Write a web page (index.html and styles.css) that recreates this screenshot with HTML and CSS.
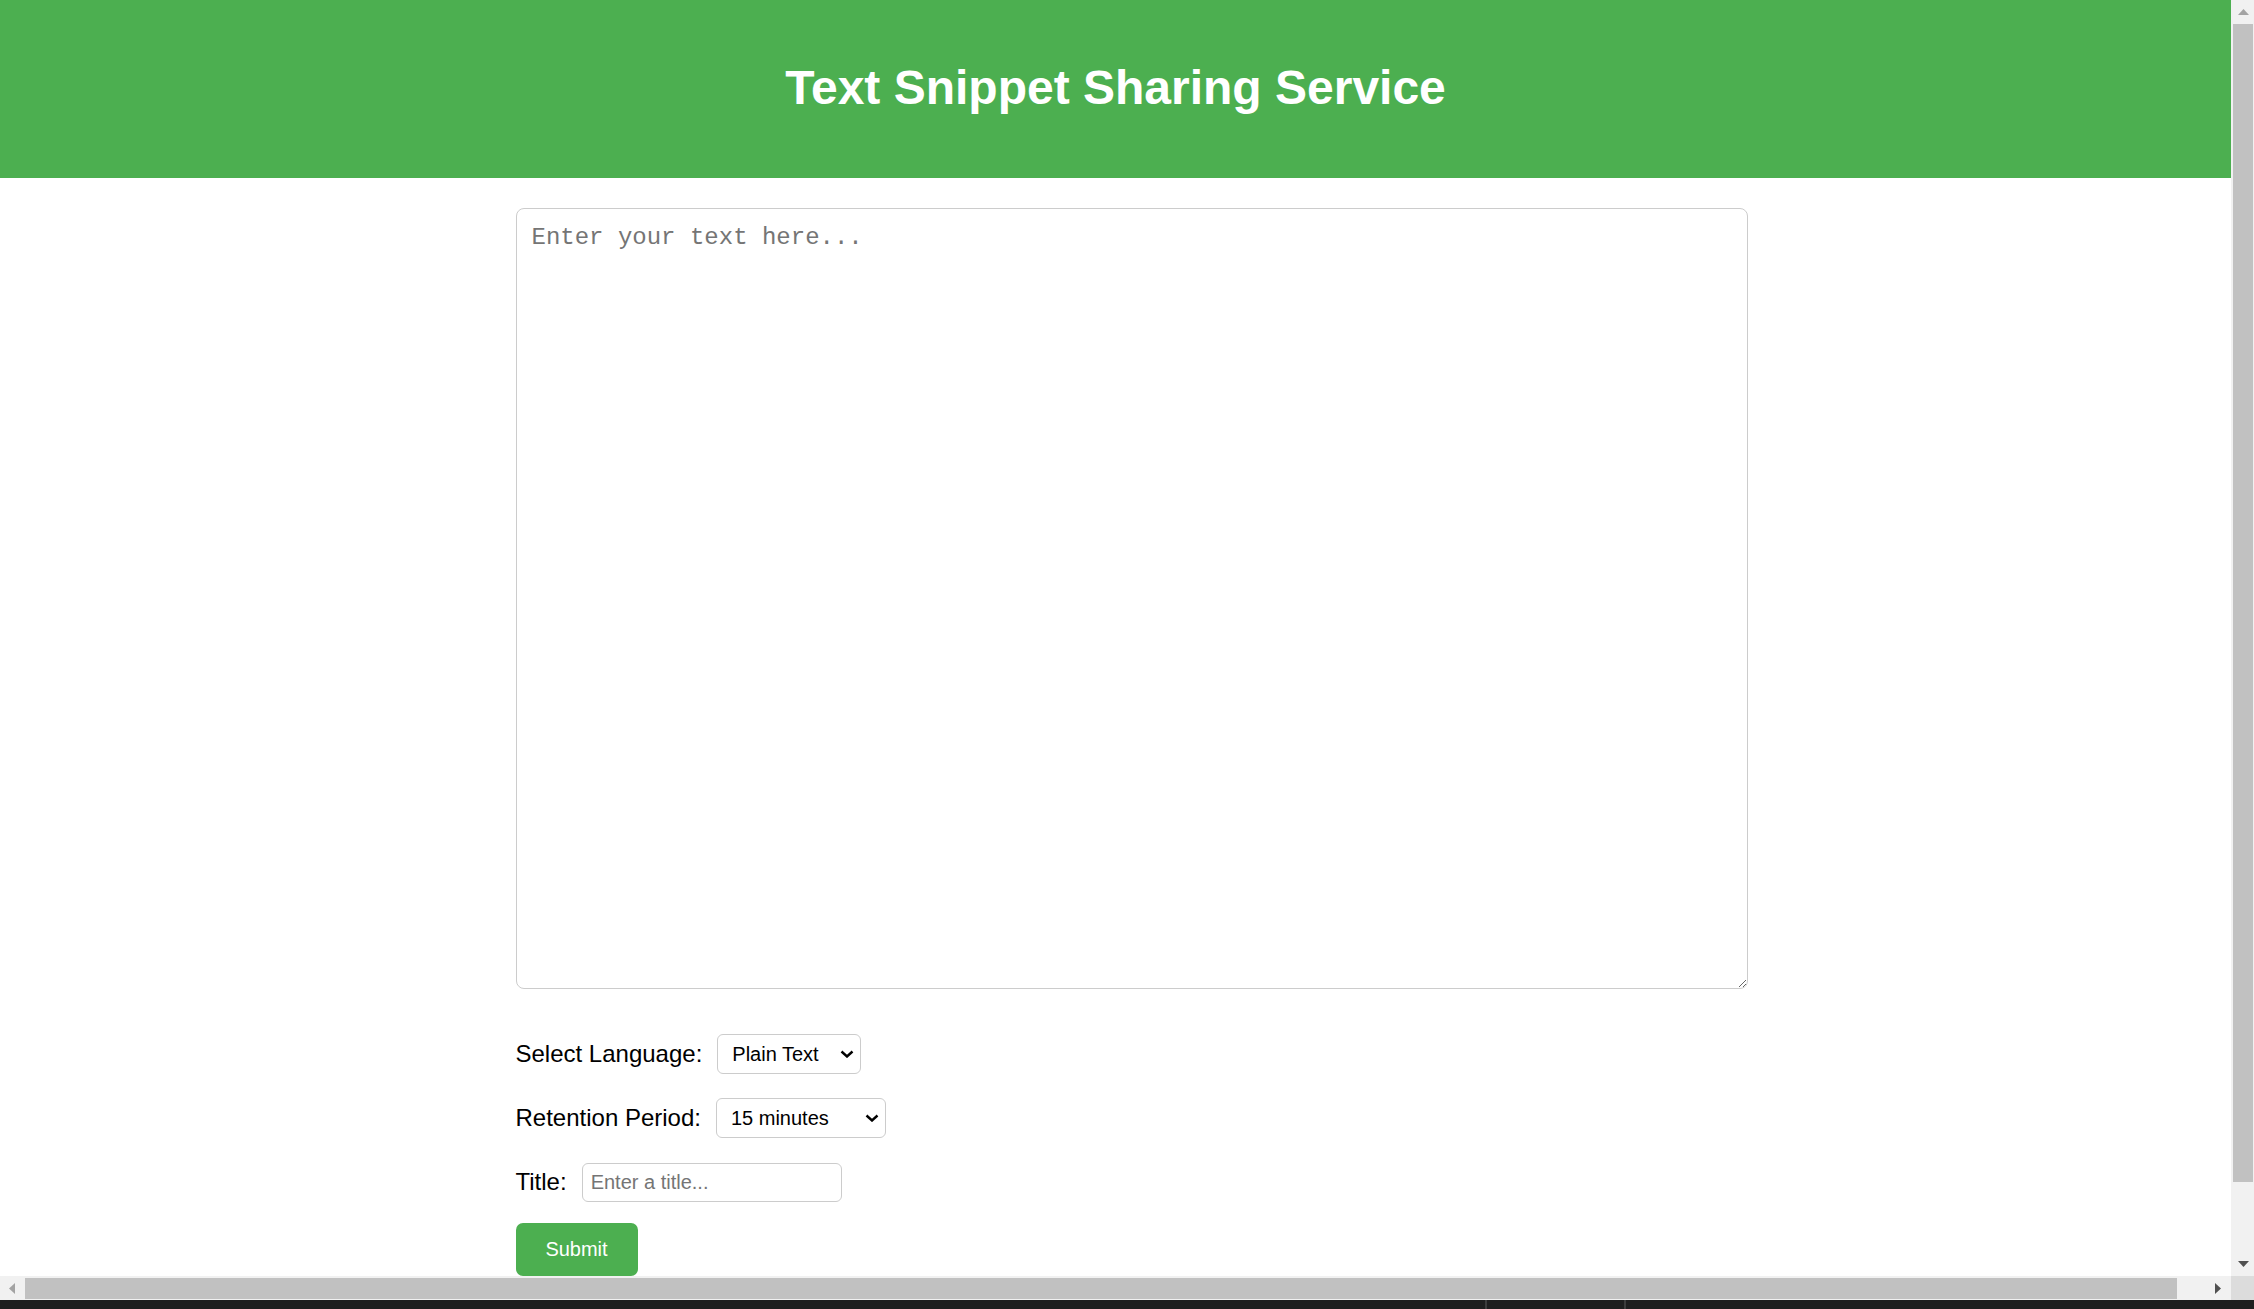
FILE: index.html
```html
<!DOCTYPE html>
<html lang="en">
<head>
<meta charset="utf-8">
<title>Text Snippet Sharing Service</title>
<link rel="stylesheet" href="styles.css">
</head>
<body>
<div class="viewport">
  <header class="site-header">
    <h1>Text Snippet Sharing Service</h1>
  </header>
  <main class="container">
    <textarea class="snippet" placeholder="Enter your text here..."></textarea>
    <div class="form-row">
      <label class="field-label" for="lang">Select Language:</label>
      <div class="select-wrap select-lang">
        <select id="lang" class="select"><option>Plain Text</option></select>
        <svg class="chevron" width="14" height="8" viewBox="0 0 14 8"><polyline points="1.5,1.5 7,6.5 12.5,1.5" fill="none" stroke="#000" stroke-width="2.4"/></svg>
      </div>
    </div>
    <div class="form-row">
      <label class="field-label" for="ret">Retention Period:</label>
      <div class="select-wrap select-ret">
        <select id="ret" class="select"><option>15 minutes</option></select>
        <svg class="chevron" width="14" height="8" viewBox="0 0 14 8"><polyline points="1.5,1.5 7,6.5 12.5,1.5" fill="none" stroke="#000" stroke-width="2.4"/></svg>
      </div>
    </div>
    <div class="form-row">
      <label class="field-label" for="title">Title:</label>
      <input id="title" class="title-input" type="text" placeholder="Enter a title...">
    </div>
    <button class="submit" type="button">Submit</button>
  </main>
</div>
<div class="vscroll">
  <div class="sb-btn sb-up"><svg width="11" height="7" viewBox="0 0 11 7"><polygon points="5.5,0 11,6 0,6" fill="#a3a3a3"/></svg></div>
  <div class="vthumb"></div>
  <div class="sb-fill"></div>
  <div class="sb-btn sb-down"><svg width="11" height="7" viewBox="0 0 11 7"><polygon points="0,0 11,0 5.5,6" fill="#505050"/></svg></div>
</div>
<div class="hscroll">
  <div class="hs-btn hs-left"><svg width="7" height="11" viewBox="0 0 7 11"><polygon points="6,0 6,11 0,5.5" fill="#a3a3a3"/></svg></div>
  <div class="hthumb"></div>
  <div class="sb-fill"></div>
  <div class="hs-btn hs-right"><svg width="7" height="11" viewBox="0 0 7 11"><polygon points="0,0 6,5.5 0,11" fill="#505050"/></svg></div>
</div>
<div class="corner"></div>
<div class="taskbar">
  <div class="tb-seg tb-a"></div>
  <div class="tb-sep"></div>
  <div class="tb-seg tb-b"></div>
  <div class="tb-sep"></div>
  <div class="tb-seg tb-c"></div>
</div>
</body>
</html>
```
FILE: styles.css
```css
html, body {
  margin: 0;
  padding: 0;
}
body {
  width: 2254px;
  height: 1309px;
  overflow: hidden;
  display: grid;
  grid-template-columns: 2231px 23px;
  grid-template-rows: 1276px 24px 9px;
  font-family: "Liberation Sans", Arial, sans-serif;
  color: #000;
  background: #fff;
}
.viewport {
  grid-column: 1;
  grid-row: 1;
  overflow: hidden;
  background: #fff;
}
.site-header {
  background: #4caf50;
  height: 178px;
  box-sizing: border-box;
  padding-top: 60px;
  text-align: center;
}
.site-header h1 {
  margin: 0;
  font-size: 48px;
  line-height: 55px;
  font-weight: bold;
  color: #fff;
}
.container {
  width: 1200px;
  margin: 0 auto;
  padding-top: 30px;
}
.snippet {
  display: block;
  box-sizing: border-box;
  width: 1232px;
  height: 781px;
  margin: 0 0 45px 0;
  padding: 15px;
  border: 1px solid #ccc;
  border-radius: 8px;
  font-family: "Liberation Mono", "Courier New", monospace;
  font-size: 24px;
  color: #000;
  background: #fff;
  outline: none;
}
.snippet::placeholder {
  color: #757575;
}
.form-row {
  display: flex;
  align-items: center;
  height: 40px;
  margin-bottom: 24px;
}
.field-label {
  font-size: 24px;
  margin-right: 15px;
}
.select-wrap {
  position: relative;
  height: 40px;
}
.select-lang { width: 144px; }
.select-ret { width: 170px; }
.select {
  -webkit-appearance: none;
  appearance: none;
  box-sizing: border-box;
  width: 100%;
  height: 40px;
  margin: 0;
  padding: 0 0 0 14px;
  border: 1px solid #ccc;
  border-radius: 6px;
  background: #fff;
  font-family: "Liberation Sans", Arial, sans-serif;
  font-size: 20px;
  color: #000;
  outline: none;
}
.chevron {
  position: absolute;
  right: 7px;
  top: 16px;
  pointer-events: none;
}
.title-input {
  box-sizing: border-box;
  width: 260px;
  height: 39px;
  margin: 0;
  padding: 0 8px;
  border: 1px solid #ccc;
  border-radius: 6px;
  font-family: "Liberation Sans", Arial, sans-serif;
  font-size: 20px;
  color: #000;
  outline: none;
}
.title-input::placeholder {
  color: #757575;
}
.submit {
  display: block;
  box-sizing: border-box;
  width: 122px;
  height: 53px;
  margin-top: -3px;
  padding: 0;
  border: none;
  border-radius: 7px;
  background: #4caf50;
  color: #fff;
  font-family: "Liberation Sans", Arial, sans-serif;
  font-size: 20px;
}

/* scrollbars */
.vscroll {
  grid-column: 2;
  grid-row: 1;
  background: #f1f1f1;
  display: flex;
  flex-direction: column;
}
.sb-btn {
  height: 24px;
  display: flex;
  align-items: center;
  justify-content: center;
  flex-shrink: 0;
}
.sb-up { padding-left: 1px; }
.sb-down { padding-left: 1px; }
.vthumb {
  height: 1158px;
  margin: 0 1px 0 2px;
  background: #c1c1c1;
  flex-shrink: 0;
}
.sb-fill {
  flex: 1;
}
.hscroll {
  grid-column: 1;
  grid-row: 2;
  background: #f1f1f1;
  display: flex;
  box-sizing: border-box;
  padding: 2px 0 1px;
}
.hs-btn {
  width: 25px;
  display: flex;
  align-items: center;
  justify-content: center;
  flex-shrink: 0;
}
.hs-left { padding-right: 1px; box-sizing: border-box; }
.hthumb {
  width: 2152px;
  background: #c1c1c1;
  flex-shrink: 0;
}
.corner {
  grid-column: 2;
  grid-row: 2;
  background: #dcdcdc;
}
.taskbar {
  grid-column: 1 / span 2;
  grid-row: 3;
  background: #1e1e1e;
  display: flex;
}
.tb-a { width: 1485px; }
.tb-b { width: 137px; }
.tb-c { flex: 1; }
.tb-sep {
  width: 2px;
  background: #3c3c3c;
}
```
